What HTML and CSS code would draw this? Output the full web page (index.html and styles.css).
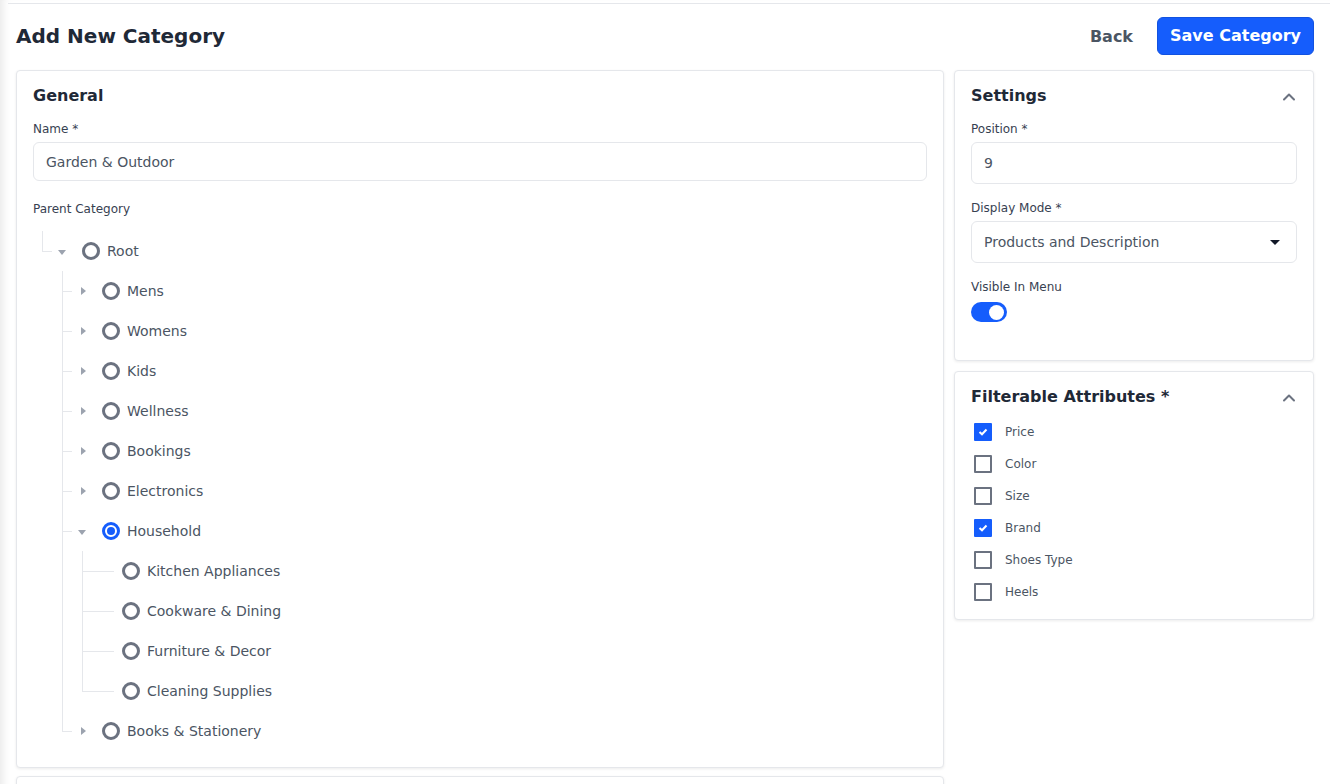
FILE: index.html
```html
<!DOCTYPE html>
<html>
<head>
    <title>Add New Category</title>
    <link rel="stylesheet" href="styles.css">
</head>
<body>
    <div class="topbar"></div>
    <div class="page">
        <div class="page-header">
            <h1>Add New Category</h1>
            <div class="actions">
                <a class="btn-back">Back</a>
                <button class="btn-primary">Save Category</button>
            </div>
        </div>

        <div class="layout">
            <div class="main-col">
                <section class="card general">
                    <h2 class="card-title">General</h2>
                    <div class="form-group">
                        <label>Name *</label>
                        <div class="input name-input">Garden &amp; Outdoor</div>
                    </div>
                    <div class="form-group">
                        <label>Parent Category</label>
                        <ul class="tree">
                            <li>
                                <div class="node"><span class="caret open"></span><span class="radio"></span>Root</div>
                                <ul>
                                    <li><div class="node"><span class="caret"></span><span class="radio"></span>Mens</div></li>
                                    <li><div class="node"><span class="caret"></span><span class="radio"></span>Womens</div></li>
                                    <li><div class="node"><span class="caret"></span><span class="radio"></span>Kids</div></li>
                                    <li><div class="node"><span class="caret"></span><span class="radio"></span>Wellness</div></li>
                                    <li><div class="node"><span class="caret"></span><span class="radio"></span>Bookings</div></li>
                                    <li><div class="node"><span class="caret"></span><span class="radio"></span>Electronics</div></li>
                                    <li>
                                        <div class="node"><span class="caret open"></span><span class="radio checked"></span>Household</div>
                                        <ul>
                                            <li class="leaf"><div class="node"><span class="radio"></span>Kitchen Appliances</div></li>
                                            <li class="leaf"><div class="node"><span class="radio"></span>Cookware &amp; Dining</div></li>
                                            <li class="leaf"><div class="node"><span class="radio"></span>Furniture &amp; Decor</div></li>
                                            <li class="leaf"><div class="node"><span class="radio"></span>Cleaning Supplies</div></li>
                                        </ul>
                                    </li>
                                    <li><div class="node"><span class="caret"></span><span class="radio"></span>Books &amp; Stationery</div></li>
                                </ul>
                            </li>
                        </ul>
                    </div>
                </section>
                <section class="card card-next"></section>
            </div>

            <div class="side-col">
                <section class="card settings">
                    <div class="card-head">
                        <h2 class="card-title">Settings</h2>
                        <svg class="chevron" width="14" height="9" viewBox="0 0 14 9"><polyline points="2,7.5 7,2.5 12,7.5" fill="none" stroke="#6b7280" stroke-width="2" stroke-linecap="round" stroke-linejoin="round"/></svg>
                    </div>
                    <div class="form-group">
                        <label>Position *</label>
                        <div class="input">9</div>
                    </div>
                    <div class="form-group">
                        <label>Display Mode *</label>
                        <div class="input select">Products and Description<span class="select-caret"></span></div>
                    </div>
                    <div class="form-group">
                        <label>Visible In Menu</label>
                        <span class="toggle"><span class="knob"></span></span>
                    </div>
                </section>

                <section class="card attributes">
                    <div class="card-head">
                        <h2 class="card-title">Filterable Attributes *</h2>
                        <svg class="chevron" width="14" height="9" viewBox="0 0 14 9"><polyline points="2,7.5 7,2.5 12,7.5" fill="none" stroke="#6b7280" stroke-width="2" stroke-linecap="round" stroke-linejoin="round"/></svg>
                    </div>
                    <div class="check-row"><span class="check checked"><svg width="10" height="8" viewBox="0 0 10 8"><polyline points="1.5,4 4,6.3 8.5,1.5" fill="none" stroke="#fff" stroke-width="2"/></svg></span>Price</div>
                    <div class="check-row"><span class="check"></span>Color</div>
                    <div class="check-row"><span class="check"></span>Size</div>
                    <div class="check-row"><span class="check checked"><svg width="10" height="8" viewBox="0 0 10 8"><polyline points="1.5,4 4,6.3 8.5,1.5" fill="none" stroke="#fff" stroke-width="2"/></svg></span>Brand</div>
                    <div class="check-row"><span class="check"></span>Shoes Type</div>
                    <div class="check-row"><span class="check"></span>Heels</div>
                </section>
            </div>
        </div>
    </div>
</body>
</html>
```

FILE: styles.css
```css
html, body {
    margin: 0;
    overflow: hidden;
}
body {
    font-family: "DejaVu Sans", Verdana, sans-serif;
    color: #1f2937;
    background: #fff;
    box-shadow: inset 9px 0 8px -6px rgba(0, 0, 0, 0.09);
    min-height: 784px;
}
.topbar {
    height: 3px;
    border-bottom: 1px solid #e5e7eb;
    margin-left: 8px;
}
.page {
    padding: 13px 16px 0 16px;
}
.page-header {
    display: flex;
    align-items: center;
    justify-content: space-between;
    height: 38px;
    margin-bottom: 15px;
}
h1 {
    margin: 0;
    font-size: 20px;
    font-weight: bold;
    color: #1f2937;
}
.actions {
    display: flex;
    align-items: center;
}
.btn-back {
    font-size: 16px;
    font-weight: bold;
    color: #4b5563;
    padding: 0 12px;
    margin-right: 12px;
}
.btn-primary {
    font-family: inherit;
    font-size: 16px;
    font-weight: bold;
    color: #fff;
    background: #155dfc;
    border: 1px solid #1252e0;
    border-radius: 6px;
    height: 38px;
    padding: 0 12px 1px 12px;
}
.layout {
    display: grid;
    grid-template-columns: 928px 1fr;
    gap: 10px;
    align-items: start;
}
.main-col, .side-col {
    display: flex;
    flex-direction: column;
}
.main-col {
    gap: 8px;
}
.side-col {
    gap: 10px;
}
.card {
    background: #fff;
    border: 1px solid #e5e7eb;
    border-radius: 4px;
    box-shadow: 0 1px 3px rgba(0, 0, 0, 0.08);
    padding: 15px 16px 16px 16px;
}
.card-next {
    height: 60px;
}
.card-title {
    margin: 0 0 15px 0;
    font-size: 16px;
    font-weight: bold;
    line-height: 20px;
    color: #1f2937;
}
.card-head {
    display: flex;
    align-items: flex-start;
    justify-content: space-between;
}
.chevron {
    margin-top: 6px;
    margin-right: 1px;
}
.form-group {
    margin-bottom: 16px;
}
.form-group:last-child {
    margin-bottom: 0;
}
label {
    display: block;
    font-size: 12px;
    line-height: 16px;
    color: #374151;
    margin-bottom: 5px;
}
.input {
    display: flex;
    align-items: center;
    height: 42px;
    box-sizing: border-box;
    border: 1px solid #e5e7eb;
    border-radius: 6px;
    padding: 0 12px;
    font-size: 14px;
    color: #4b5563;
}
.name-input {
    height: 39px;
}
.general .form-group {
    margin-bottom: 20px;
}
.general .form-group:last-child {
    margin-bottom: 0;
}
.select {
    justify-content: space-between;
}
.select-caret {
    width: 0;
    height: 0;
    border-left: 5px solid transparent;
    border-right: 5px solid transparent;
    border-top: 5px solid #111827;
    margin-right: 4px;
}
.toggle {
    display: flex;
    justify-content: flex-end;
    align-items: center;
    width: 36px;
    height: 20px;
    box-sizing: border-box;
    padding: 0 3px;
    border-radius: 10px;
    background: #155dfc;
    margin-top: 7px;
    margin-bottom: 22px;
}
.knob {
    width: 15px;
    height: 15px;
    border-radius: 50%;
    background: #fff;
}

/* tree */
.tree, .tree ul {
    list-style: none;
    margin: 0;
}
.tree {
    padding-left: 9px;
    margin-top: 14px;
}
.tree ul {
    padding-left: 20px;
}
.tree li {
    position: relative;
}
.tree li::before {
    content: "";
    position: absolute;
    left: 0;
    top: 0;
    bottom: 0;
    border-left: 1px solid #e5e7eb;
}
.tree li:last-child::before {
    bottom: auto;
    height: 20px;
}
.tree li::after {
    content: "";
    position: absolute;
    left: 0;
    top: 20px;
    width: 10px;
    border-top: 1px solid #e5e7eb;
}
.tree li.leaf::after {
    width: 32px;
}
.node {
    display: flex;
    align-items: center;
    height: 40px;
    padding-left: 10px;
    font-size: 14px;
    color: #4b5563;
}
.leaf > .node {
    padding-left: 40px;
}
.caret {
    display: flex;
    align-items: center;
    justify-content: center;
    width: 20px;
    height: 20px;
    margin-right: 10px;
}
.caret::before {
    content: "";
    width: 0;
    height: 0;
    border-top: 4px solid transparent;
    border-bottom: 4px solid transparent;
    border-left: 5px solid #9ca3af;
    margin-left: 2px;
}
.caret.open::before {
    border-left: 4px solid transparent;
    border-right: 4px solid transparent;
    border-top: 5px solid #9ca3af;
    border-bottom: 0;
    margin-left: 0;
    margin-top: 2px;
}
.radio {
    display: flex;
    align-items: center;
    justify-content: center;
    width: 18px;
    height: 18px;
    box-sizing: border-box;
    border: 3px solid #6b7280;
    border-radius: 50%;
    margin-right: 7px;
    flex-shrink: 0;
}
.radio.checked {
    border-color: #155dfc;
}
.radio.checked::after {
    content: "";
    width: 8px;
    height: 8px;
    border-radius: 50%;
    background: #155dfc;
}

/* checkboxes */
.attributes {
    padding-bottom: 11px;
}
.attributes .card-title {
    margin-bottom: 9px;
}
.check-row {
    display: flex;
    align-items: center;
    height: 32px;
    font-size: 12px;
    color: #4b5563;
}
.check {
    display: flex;
    align-items: center;
    justify-content: center;
    width: 18px;
    height: 18px;
    box-sizing: border-box;
    border: 2px solid #6b7280;
    border-radius: 1px;
    margin-left: 3px;
    margin-right: 13px;
}
.check.checked {
    background: #155dfc;
    border-color: #155dfc;
}
```
